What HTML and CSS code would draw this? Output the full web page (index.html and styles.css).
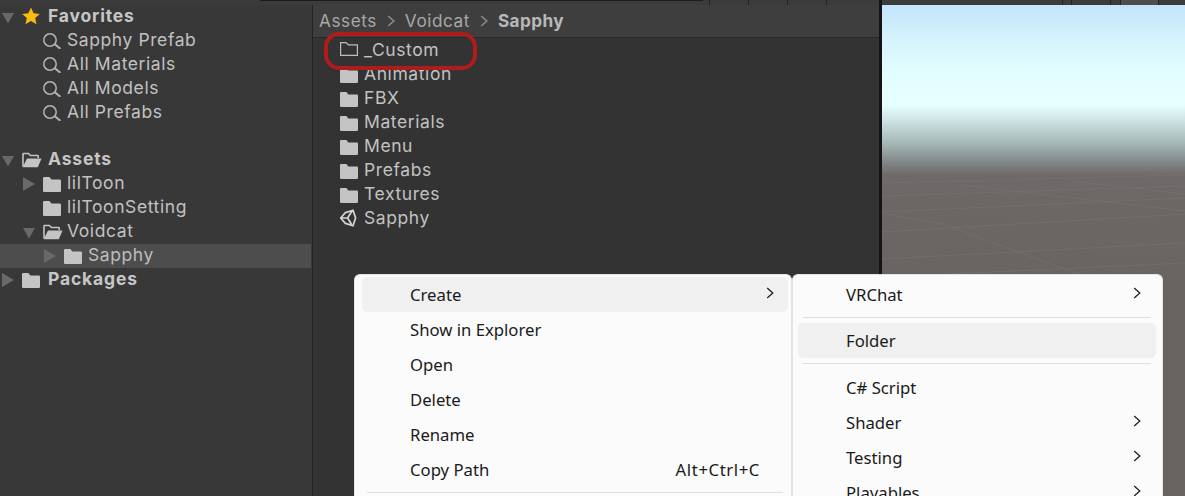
FILE: index.html
```html
<!DOCTYPE html>
<html lang="en">
<head>
<meta charset="utf-8">
<title>Unity Project Window</title>
<link rel="stylesheet" href="styles.css">
</head>
<body>
<svg class="defs" width="0" height="0" aria-hidden="true">
  <defs>
    <symbol id="folder" viewBox="0 -3 18 18"><path d="M1.2 0H6.4L8.4 2.6H16.8A1.2 1.2 0 0 1 18 3.8V13.8A1.2 1.2 0 0 1 16.8 15H1.2A1.2 1.2 0 0 1 0 13.8V1.2A1.2 1.2 0 0 1 1.2 0Z" fill="#c4c4c4"/></symbol>
    <symbol id="folder-open" viewBox="0 -2.5 20 18"><path d="M1 14V1.6C1 1.2 1.2 1 1.6 1H6.4L8.4 3H15.6C16 3 16.2 3.2 16.2 3.6V5.5" fill="none" stroke="#c4c4c4" stroke-width="1.6"/><path d="M5 6H19.6L15.8 14.8H.6Z" fill="#c4c4c4"/></symbol>
    <symbol id="folder-line" viewBox="0 -1 18 18"><path d="M.6.6H6.2L8.3 2.8H17.4V13.4H.6Z" fill="none" stroke="#bdbdbd" stroke-width="1.2"/></symbol>
    <symbol id="search" viewBox="0 -2 18 18"><circle cx="7" cy="7" r="6.2" fill="none" stroke="#b4b4b4" stroke-width="1.5"/><path d="M11.8 11.2L17.4 15.8" stroke="#b4b4b4" stroke-width="2"/></symbol>
    <symbol id="tri-down" viewBox="0 -5 12 16"><path d="M0 0H12L6 10.5Z" fill="#696969"/></symbol>
    <symbol id="tri-right" viewBox="0 -2 12 16"><path d="M0 0L12 7L0 14Z" fill="#696969"/></symbol>
    <symbol id="chev" viewBox="0 0 8 12"><path d="M1.2 1L6.8 6L1.2 11" fill="none" stroke="#1c1c1c" stroke-width="1.25"/></symbol>
  </defs>
</svg>

<div class="app">
  <div class="strip">
    <span class="strip-dark"></span>
    <span class="strip-tab"></span><span class="strip-tab"></span><span class="strip-tab"></span><span class="strip-tab"></span>
    <span class="strip-rule"></span>
    <span class="strip-tab narrow"></span><span class="strip-tab wide"></span><span class="strip-tab narrow"></span><span class="strip-tab on"></span>
  </div>

  <div class="panes">
    <nav class="sidebar">
      <div class="row lvl0"><svg class="tri"><use href="#tri-down"/></svg><svg class="star" viewBox="0 0 18 18"><path d="M9 .5L11.6 6.2L17.8 6.9L13.2 11.1L14.5 17.3L9 14.1L3.5 17.3L4.8 11.1L.2 6.9L6.4 6.2Z" fill="#fdb913"/></svg><b>Favorites</b></div>
      <div class="row lvl1"><svg class="ico"><use href="#search"/></svg>Sapphy Prefab</div>
      <div class="row lvl1"><svg class="ico"><use href="#search"/></svg>All Materials</div>
      <div class="row lvl1"><svg class="ico"><use href="#search"/></svg>All Models</div>
      <div class="row lvl1"><svg class="ico"><use href="#search"/></svg>All Prefabs</div>
      <div class="tree">
        <div class="row lvl0"><svg class="tri"><use href="#tri-down"/></svg><svg class="ico wide-ico"><use href="#folder-open"/></svg><b>Assets</b></div>
        <div class="row lvl1 has-tri"><svg class="tri"><use href="#tri-right"/></svg><svg class="ico"><use href="#folder"/></svg>lilToon</div>
        <div class="row lvl1"><svg class="ico"><use href="#folder"/></svg>lilToonSetting</div>
        <div class="row lvl1 has-tri"><svg class="tri"><use href="#tri-down"/></svg><svg class="ico wide-ico"><use href="#folder-open"/></svg>Voidcat</div>
        <div class="row lvl2 selected"><svg class="tri"><use href="#tri-right"/></svg><svg class="ico"><use href="#folder"/></svg>Sapphy</div>
        <div class="row lvl0"><svg class="tri"><use href="#tri-right"/></svg><svg class="ico"><use href="#folder"/></svg><b>Packages</b></div>
      </div>
    </nav>

    <main class="project">
      <header class="crumbs">
        <span>Assets</span>
        <svg class="crumb-sep" viewBox="0 0 8 12"><path d="M1.2 1L6.8 6L1.2 11" fill="none" stroke="#8a8a8a" stroke-width="1.6"/></svg>
        <span>Voidcat</span>
        <svg class="crumb-sep" viewBox="0 0 8 12"><path d="M1.2 1L6.8 6L1.2 11" fill="none" stroke="#8a8a8a" stroke-width="1.6"/></svg>
        <b>Sapphy</b>
      </header>
      <div class="files">
        <div class="row file"><svg class="ico"><use href="#folder-line"/></svg>_Custom</div>
        <div class="row file"><svg class="ico"><use href="#folder"/></svg>Animation</div>
        <div class="row file"><svg class="ico"><use href="#folder"/></svg>FBX</div>
        <div class="row file"><svg class="ico"><use href="#folder"/></svg>Materials</div>
        <div class="row file"><svg class="ico"><use href="#folder"/></svg>Menu</div>
        <div class="row file"><svg class="ico"><use href="#folder"/></svg>Prefabs</div>
        <div class="row file"><svg class="ico"><use href="#folder"/></svg>Textures</div>
        <div class="row file"><svg class="ico unity" viewBox="0 0 18 18"><path d="M7.6 9L.6 9M7.6 9L11.8 2.2M7.6 9L11.8 15.8M.6 9L5.4 3.6L13 1.2L15.6 9L13 16.8L5.4 14.4Z" fill="none" stroke="#d6d6d6" stroke-width="1.7" stroke-linejoin="round"/></svg>Sapphy</div>
      </div>
    </main>

    <section class="scene">
      <svg class="grid" viewBox="0 0 304 491" preserveAspectRatio="none" aria-hidden="true">
        <g stroke="#7a7471" stroke-width="1" fill="none" opacity=".55">
          <path d="M0 178L304 170M0 191L304 181M0 207L304 193M0 227L304 209M0 254L304 238M0 272L304 258"/>
          <path d="M0 208L60 219L150 252L236 282M80 180L304 206M190 176L304 189"/>
        </g>
      </svg>
    </section>
  </div>
</div>

<div class="callout"></div>

<div class="menus">
  <ul class="menu first">
    <li class="item hover"><span>Create</span><svg class="chev"><use href="#chev"/></svg></li>
    <li class="item"><span>Show in Explorer</span></li>
    <li class="item"><span>Open</span></li>
    <li class="item"><span>Delete</span></li>
    <li class="item"><span>Rename</span></li>
    <li class="item"><span>Copy Path</span><kbd>Alt+Ctrl+C</kbd></li>
    <li class="sep"></li>
  </ul>
  <ul class="menu second">
    <li class="item"><span>VRChat</span><svg class="chev"><use href="#chev"/></svg></li>
    <li class="sep"></li>
    <li class="item hover"><span>Folder</span></li>
    <li class="sep"></li>
    <li class="item"><span>C# Script</span></li>
    <li class="item"><span>Shader</span><svg class="chev"><use href="#chev"/></svg></li>
    <li class="item"><span>Testing</span><svg class="chev"><use href="#chev"/></svg></li>
    <li class="item"><span>Playables</span><svg class="chev"><use href="#chev"/></svg></li>
  </ul>
</div>
</body>
</html>
```

FILE: styles.css
```css
* { box-sizing: border-box; }

html, body {
  margin: 0;
  height: 100%;
  overflow: hidden;
  background: #333;
}

body {
  position: relative;
  font-family: Inter, "Liberation Sans", sans-serif;
}

.defs { position: absolute; }

.app {
  display: flex;
  flex-direction: column;
  height: 496px;
}

.strip {
  position: relative;
  flex: 0 0 5px;
  display: flex;
  background: #3b3b3b;
  padding-left: 260px;
}

.strip-dark {
  width: 443px;
  height: 1px;
  margin-right: 6px;
  background: #1c1c1c;
}

.strip-tab {
  width: 39px;
  border-left: 1px solid #222;
}

.strip-rule {
  width: 183px;
  margin-left: 14px;
  border-left: 3px solid #141414;
}

.strip-tab.narrow { width: 9px; }
.strip-tab.wide { width: 39px; }
.strip-tab.narrow:nth-last-child(2) { width: 10px; }
.strip-tab.on { width: 39px; background: #4e4e4e; border-right: 1px solid #222; }

.panes {
  flex: 1;
  display: flex;
  min-height: 0;
}

.sidebar {
  flex: 0 0 313px;
  background: #383838;
  border-right: 1px solid #232323;
  margin-top: -5px;
  padding-top: 4px;
}

.tree { margin-top: 23px; }

.row {
  display: flex;
  align-items: center;
  height: 24px;
  padding-bottom: 2px;
  font-size: 17.5px;
  letter-spacing: .59px;
  color: #c2c2c2;
  white-space: nowrap;
}

.row svg { margin-top: 2px; }

.row b {
  font-weight: 700;
  color: #c6c6c6;
  letter-spacing: .83px;
}

.lvl0 { padding-left: 2px; }
.lvl1 { padding-left: 43px; }
.lvl1.has-tri { padding-left: 23px; }
.lvl2 { padding-left: 44px; }

.selected {
  background: #4d4d4d;
  margin: 1px 1px -1px 0;
  padding-bottom: 4px;
  color: #bdbdbd;
}

.tri {
  flex: none;
  width: 12px;
  height: 16px;
  margin-right: 8px;
}

.star {
  flex: none;
  width: 18px;
  height: 18px;
  margin-right: 8px;
}

.ico {
  flex: none;
  width: 18px;
  height: 18px;
  margin-right: 6px;
}

.ico.wide-ico { width: 20px; margin-right: 4px; }

.lvl0 .ico { margin-right: 8px; }
.lvl0 .ico.wide-ico { margin-right: 6px; }

.project {
  flex: 0 0 566px;
  display: flex;
  flex-direction: column;
  background: #333;
}

.crumbs {
  flex: 0 0 33px;
  display: flex;
  align-items: center;
  gap: 10px;
  padding: 0 0 2px 6px;
  background: #3e3e3e;
  border-bottom: 1px solid #2a2a2a;
  font-size: 17.2px;
  letter-spacing: .55px;
  color: #a8a8a8;
}

.crumbs b {
  font-weight: 700;
  color: #b8b8b8;
  letter-spacing: .4px;
}

.crumb-sep { width: 8px; height: 12px; margin-top: 2px; }

.files .row { padding-left: 27px; }

.scene {
  flex: 1;
  border-left: 3px solid #141414;
  position: relative;
  background: linear-gradient(180deg,
    #c3e4fb 0,
    #d6f4fd 35px,
    #e2fdff 65px,
    #e6ffff 100px,
    #cfe4e4 115px,
    #a7b8b8 138px,
    #7f8585 158px,
    #6f6a69 170px,
    #6c6765 200px,
    #696360 300px);
}

.grid {
  position: absolute;
  inset: 0;
  width: 100%;
  height: 100%;
}

.callout {
  position: absolute;
  left: 324px;
  top: 32px;
  width: 153px;
  height: 38px;
  border: 4px solid #b01c1c;
  border-radius: 15px;
}

.menus {
  position: absolute;
  left: 354px;
  top: 274px;
  display: flex;
  align-items: flex-start;
}

.menu {
  list-style: none;
  margin: 0;
  padding: 2px 0 0;
  background: #fbfbfb;
  border: 1px solid #e4e4e4;
  border-bottom: 0;
  border-radius: 6px 6px 0 0;
  font-family: "Noto Sans", "Open Sans", sans-serif;
  font-size: 16.7px;
  color: #1a1a1a;
}

.menu.first { width: 438px; padding-left: 7px; padding-right: 3px; }
.menu.second { width: 371px; padding-left: 5px; padding-right: 6px; }

.item {
  display: flex;
  align-items: center;
  height: 35px;
  padding-left: 48px;
  padding-right: 14px;
  border-radius: 5px;
}

.menu.second .item { padding-right: 15px; }

.item span { flex: 1; }

.hover { background: #f0f0f0; }

.chev {
  width: 8px;
  height: 12px;
  margin-top: -3px;
}

.item kbd {
  font: inherit;
  letter-spacing: .6px;
  margin-right: 14px;
}

.sep {
  height: 1px;
  margin: 5px;
  background: #dedede;
}

.menu.second .sep:nth-of-type(4) { margin-bottom: 6px; }
```
